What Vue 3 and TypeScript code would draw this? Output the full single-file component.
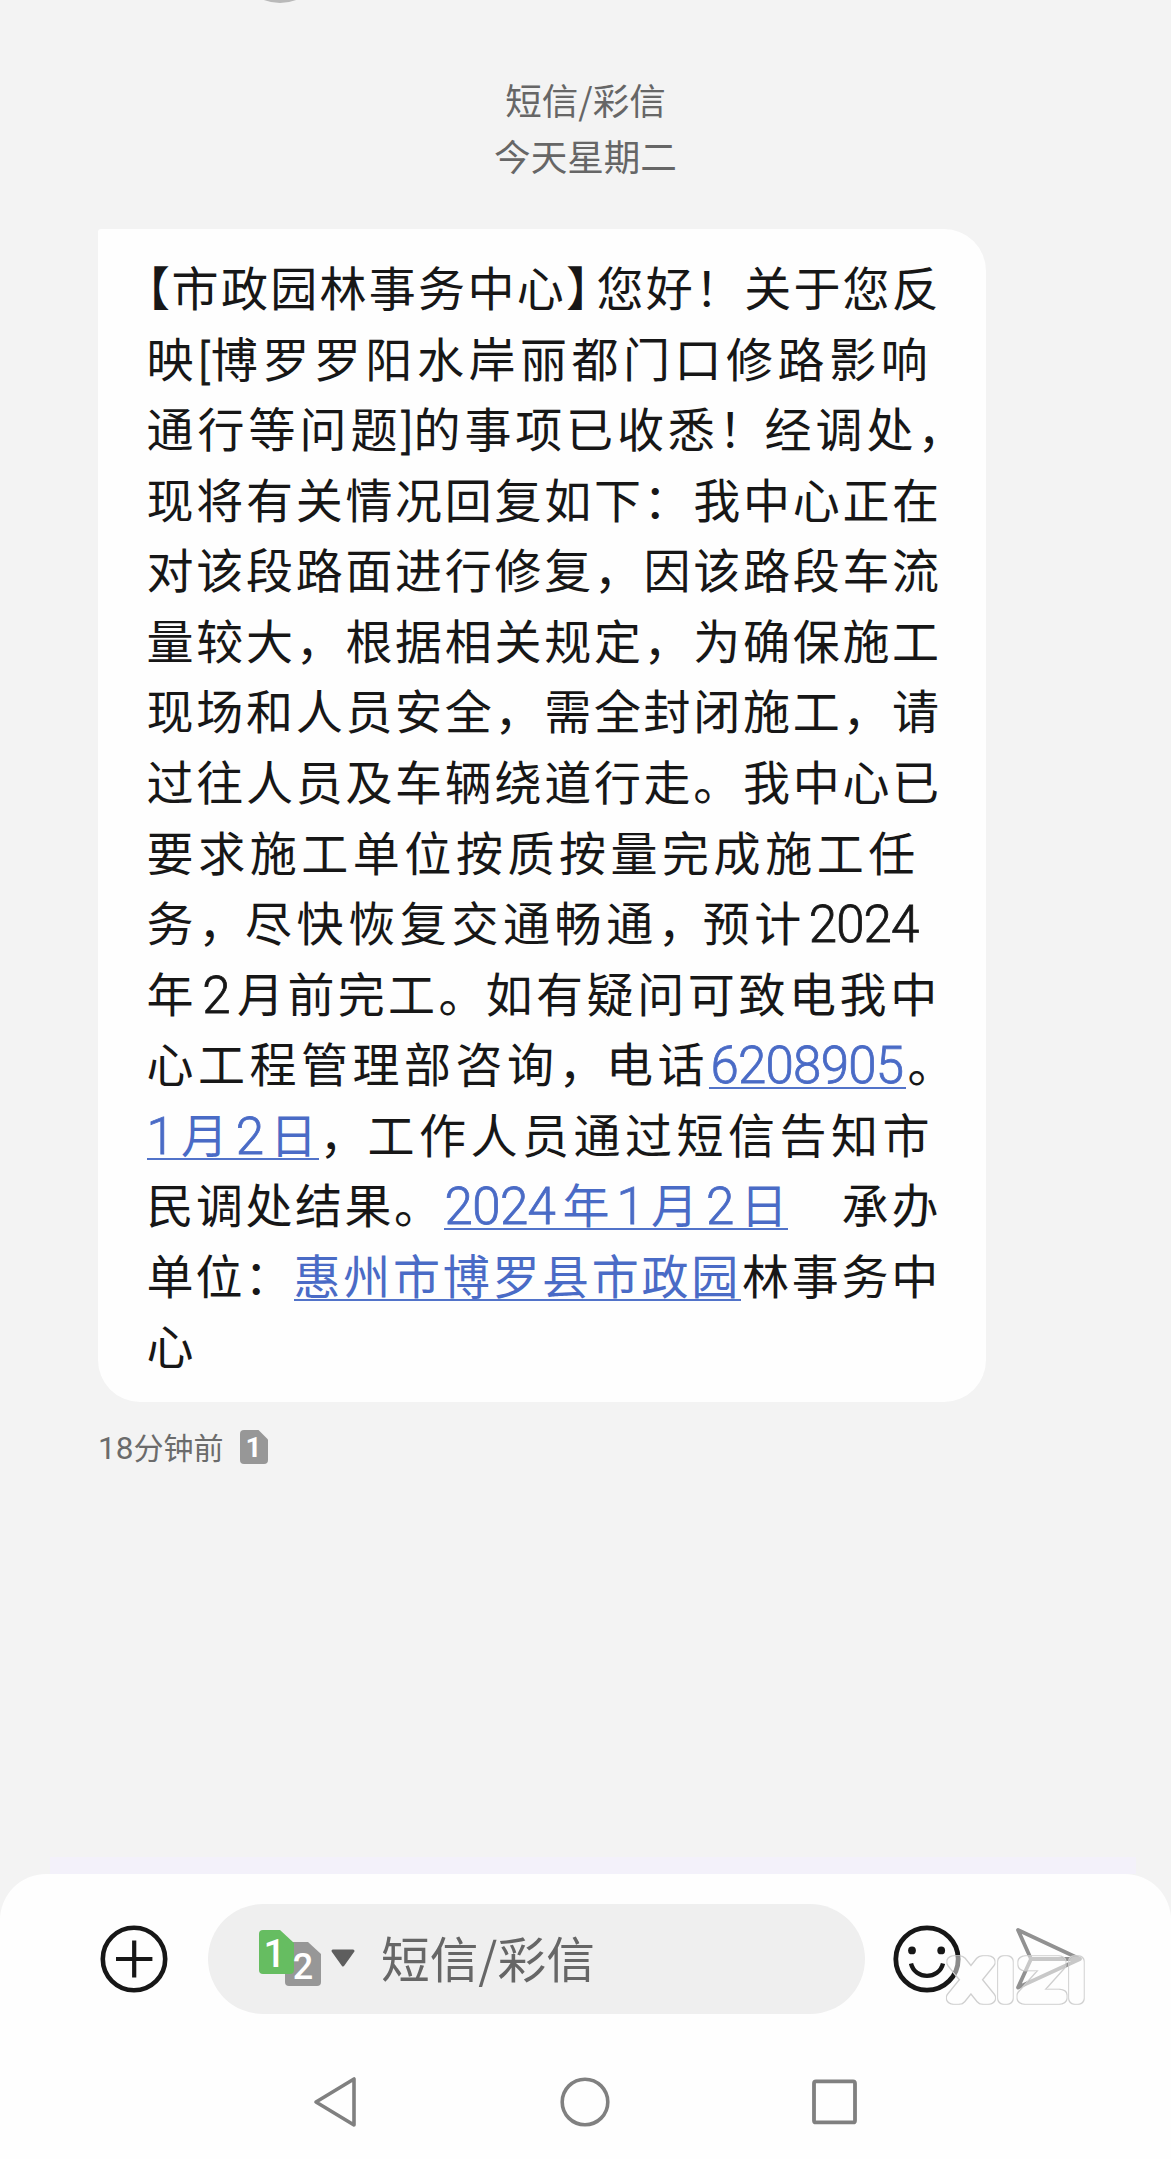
<script setup lang="ts">
interface Segment {
  text: string
  width: number
  pad: number
  kind: 'han' | 'num' | 'mark' | 'half'
  link: boolean
}

const HAN = 47
const NUM = 51

function seg(text: string, width: number, link = false, pad = 0): Segment {
  let kind: Segment['kind'] = 'han'
  if (/^[0-9]+$/.test(text)) kind = 'num'
  else if (/^[[\]]$/.test(text)) kind = 'mark'
  else if (/^[【】]$/.test(text)) kind = 'half'
  return { text, width, pad, kind, link }
}

/* Justified message lines: every run carries the width it is spread over. */
const lines: Segment[][] = [
  [seg('【', 25), seg('市政园林事务中心', 394.4), seg('】', 30.6), seg('您好！关于您反', 344.4)],
  [seg('映', 51.6), seg('[', 12.6), seg('博罗罗阳水岸丽都门口修路影响', 721.4)],
  [seg('通行等问题', 255), seg(']', 12), seg('的事项已收悉', 305), seg('！', 46), seg('经调处，', 204)],
  [seg('现将有关情况回复如下：我中心正在', 795.2)],
  [seg('对该段路面进行修复，因该路段车流', 795.2)],
  [seg('量较大，根据相关规定，为确保施工', 795.2)],
  [seg('现场和人员安全，需全封闭施工，请', 795.2)],
  [seg('过往人员及车辆绕道行走。我中心已', 795.2)],
  [seg('要求施工单位按质按量完成施工任', 773.2)],
  [seg('务', 51.6), seg('，', 46.8), seg('尽快恢复交通畅通', 412.8), seg('，', 45), seg('预计', 103), seg('2024', 111, false, 3)],
  [seg('年', 50.5), seg('2', 38.5), seg('月前完工', 201.3, false, 1.5), seg('。', 47), seg('如有疑问可致电我中', 455.4)],
  [seg('心工程管理部咨询', 412), seg('，', 47.5), seg('电话', 103), seg('6208905', 195, true, 1.5), seg('。', 45, false, 2)],
  [seg('1', 28, true), seg('月', 48.5, true, 6.5), seg('2', 40.5, true), seg('日', 48.5, true), seg('，', 48, false, 1), seg('工作人员通过短信告知市', 566.5)],
  [seg('民调处结果。', 297), seg('2024', 112, true, 1), seg('年', 50, true, 6), seg('1', 36, true), seg('月', 48.5, true, 2.5), seg('2', 41, true), seg('日', 47, true), seg('　', 54), seg('承办', 100)],
  [seg('单位：', 147), seg('惠州市博罗县市政园', 447.3, true), seg('林事务中', 199.2, false, 1)],
  [seg('心', 50)],
]

function runStyle(s: Segment): Record<string, string> {
  const n = s.text.length
  const box = { width: `${s.width + s.pad}px`, paddingLeft: `${s.pad}px` }
  if (s.kind === 'han') return { ...box, letterSpacing: `${(s.width / n - HAN).toFixed(3)}px` }
  if (s.kind === 'num' && n > 1) return { ...box, letterSpacing: `${(s.width / n - NUM * 0.5615).toFixed(3)}px` }
  return box
}
</script>

<template>
  <div class="screen">
    <main class="thread">
      <span class="avatar-edge"></span>
      <header class="day">
        <div>短信/彩信</div>
        <div>今天星期二</div>
      </header>

      <article class="bubble">
        <div v-for="(line, i) in lines" :key="i" class="line">
          <span
            v-for="(s, j) in line"
            :key="j"
            class="run"
            :class="[s.kind, { link: s.link, single: s.kind === 'num' && s.text.length === 1 }]"
            :style="runStyle(s)"
          >{{ s.text }}</span>
        </div>
      </article>

      <footer class="meta">
        <span class="ago"><span class="ago-num">18</span>分钟前</span>
        <svg class="sim-small" width="28" height="34" viewBox="0 0 28 34">
          <path d="M4 0H18.5L28 9.5V30Q28 34 24 34H4Q0 34 0 30V4Q0 0 4 0Z" fill="#979797" />
          <text x="13.5" y="27" text-anchor="middle" font-size="28" font-weight="700" fill="#fff">1</text>
        </svg>
      </footer>
    </main>

    <section class="composer">
      <div class="bar">
        <svg class="plus" width="68" height="68" viewBox="0 0 68 68" fill="none" stroke="#171717">
          <circle cx="34" cy="34" r="31.2" stroke-width="4.6" />
          <path d="M16 34H52.4M34.2 15.5V52.5" stroke-width="4.2" />
        </svg>
        <div class="field">
          <svg class="sims" width="64" height="58" viewBox="0 0 64 58">
            <path d="M30 12H49L62 24V52Q62 56 58 56H30Q26 56 26 52V16Z" fill="#979797" />
            <path d="M4 0H21L35 13V40Q35 44 31 44H4Q0 44 0 40V4Q0 0 4 0Z" fill="#66bd61" />
            <text x="15.5" y="37" text-anchor="middle" font-size="39" font-weight="500" fill="#fff">1</text>
            <text x="44" y="49" text-anchor="middle" font-size="36" font-weight="500" fill="#fff">2</text>
          </svg>
          <svg class="caret" width="26" height="20" viewBox="0 0 26 20">
            <path d="M3 2H23L13 16Z" fill="#5e5e5e" stroke="#5e5e5e" stroke-width="3" stroke-linejoin="round" />
          </svg>
          <span class="hint">短信/彩信</span>
        </div>
        <svg class="smile" width="68" height="68" viewBox="0 0 68 68" fill="none" stroke="#171717">
          <circle cx="34" cy="34" r="31.2" stroke-width="4.8" />
          <circle cx="19" cy="25.4" r="3.9" fill="#171717" stroke="none" />
          <circle cx="48.2" cy="25.4" r="3.9" fill="#171717" stroke="none" />
          <path d="M18 38.5C22 55 46 55 50 38.5" stroke-width="4.4" />
        </svg>
        <svg class="send" width="72" height="68" viewBox="0 0 72 68" fill="none" stroke="#919191" stroke-width="3.8" stroke-linejoin="round">
          <path d="M4 5L66 34L4 62.5L17 34Z" />
          <path d="M17 34H66" />
        </svg>
        <svg class="brand" width="156" height="64" viewBox="0 0 156 64">
          <defs>
            <filter id="contour" filterUnits="userSpaceOnUse" x="0" y="0" width="156" height="64">
              <feMorphology in="SourceAlpha" operator="dilate" radius="1" result="grown" />
              <feFlood flood-color="#cfcfcf" />
              <feComposite in2="grown" operator="in" result="tinted" />
              <feComposite in="tinted" in2="SourceAlpha" operator="out" result="edge" />
              <feComponentTransfer in="SourceGraphic" result="veil">
                <feFuncA type="linear" slope="0.5" />
              </feComponentTransfer>
              <feMerge>
                <feMergeNode in="veil" />
                <feMergeNode in="edge" />
              </feMerge>
            </filter>
          </defs>
          <g filter="url(#contour)" text-anchor="middle">
            <text transform="translate(33 50) scale(1.22 1)">X</text>
            <text transform="translate(67.5 50)">I</text>
            <text transform="translate(104 50) scale(1.32 1)">Z</text>
            <text transform="translate(138.5 50)">I</text>
          </g>
        </svg>
      </div>

      <nav class="keys">
        <svg width="46" height="52" viewBox="0 0 46 52" fill="none" stroke="#808080" stroke-width="3.6" stroke-linejoin="round">
          <path d="M42 3V49L4 26Z" />
        </svg>
        <svg width="52" height="52" viewBox="0 0 52 52" fill="none" stroke="#808080" stroke-width="3.6">
          <circle cx="26" cy="26" r="22.8" />
        </svg>
        <svg width="46" height="52" viewBox="0 0 46 52" fill="none" stroke="#808080" stroke-width="3.8">
          <rect x="2" y="5.4" width="41" height="41" rx="2" />
        </svg>
      </nav>
    </section>
  </div>
</template>

<style>
body {
  margin: 0;
  background: #f3f3f3;
}
</style>

<style scoped>
.screen {
  display: flex;
  flex-direction: column;
  width: 1171px;
  height: 2159px;
  overflow: hidden;
  background: #f3f3f3;
  font-family: "Noto Sans CJK SC", sans-serif;
}
.thread {
  position: relative;
  height: 1857px;
  flex: none;
}
.avatar-edge {
  position: absolute;
  left: 235px;
  top: -87px;
  width: 90px;
  height: 90px;
  border-radius: 50%;
  background: #b9b9b9;
}
.day {
  padding-top: 72px;
  text-align: center;
  font-size: 36.6px;
  line-height: 56px;
  color: #666;
}
.bubble {
  box-sizing: border-box;
  width: 888px;
  height: 1173px;
  margin: 45px 0 0 98px;
  padding: 22px 0 0 48.6px;
  background: #fefefe;
  border-radius: 3px 42px 42px 42px;
}
.line {
  display: flex;
  align-items: flex-start;
  height: 70.57px;
  white-space: pre;
}
.run {
  box-sizing: border-box;
  flex: none;
  height: 70.57px;
  line-height: 70.57px;
  font-size: 47px;
  color: #171717;
}
/* The taller line boxes bring Latin glyphs down to the Han baseline. */
.num {
  font-family: Roboto, sans-serif;
  font-size: 51px;
  font-weight: 300;
  line-height: 77px;
  -webkit-text-stroke: 0.8px currentColor;
}
.single {
  text-align: center;
}
.mark {
  font-family: Roboto, sans-serif;
  font-size: 47px;
  font-weight: 300;
  line-height: 79px;
  -webkit-text-stroke: 0.8px currentColor;
}
.half {
  font-feature-settings: "halt" 1;
}
.link {
  color: #4a6bc6;
  background: linear-gradient(#5273c9, #5273c9) 0 60px / 100% 2px no-repeat;
}
.meta {
  display: flex;
  align-items: center;
  height: 34px;
  padding: 28px 0 0 98px;
}
.ago {
  width: 142px;
  font-size: 30px;
  line-height: 34px;
  color: #6b6b6b;
}
.ago-num {
  font-family: Roboto, sans-serif;
  font-size: 31.5px;
}
.sim-small text,
.sims text {
  font-family: Roboto, sans-serif;
}
.composer {
  position: relative;
  height: 285px;
  margin-top: 17px;
  background: #fefefe;
  border-radius: 46px 46px 0 0;
}
.composer::before {
  content: "";
  position: absolute;
  left: 50px;
  right: 35px;
  top: -17px;
  height: 17px;
  background: #f3f1fa;
}
.bar {
  position: relative;
  display: flex;
  align-items: center;
  height: 110px;
  padding: 30px 0 0 100px;
}
.field {
  box-sizing: border-box;
  display: flex;
  align-items: center;
  width: 657px;
  height: 110px;
  margin-left: 40px;
  padding-left: 51px;
  border-radius: 55px;
  background: #efefef;
}
.caret {
  margin-left: 7px;
}
.hint {
  margin: -4px 0 0 25px;
  font-size: 48.7px;
  line-height: 70px;
  color: #666;
}
.smile {
  margin-left: 28px;
}
.send {
  margin-left: 53px;
}
.brand {
  position: absolute;
  left: 938px;
  top: 74px;
}
.brand text {
  font-family: Roboto, sans-serif;
  font-weight: 300;
  font-size: 50px;
  fill: #fff;
  stroke: #fff;
  stroke-width: 11.5px;
  stroke-linejoin: round;
}
.keys {
  display: flex;
  align-items: center;
  gap: 201px;
  padding: 62px 0 0 312px;
}
</style>
